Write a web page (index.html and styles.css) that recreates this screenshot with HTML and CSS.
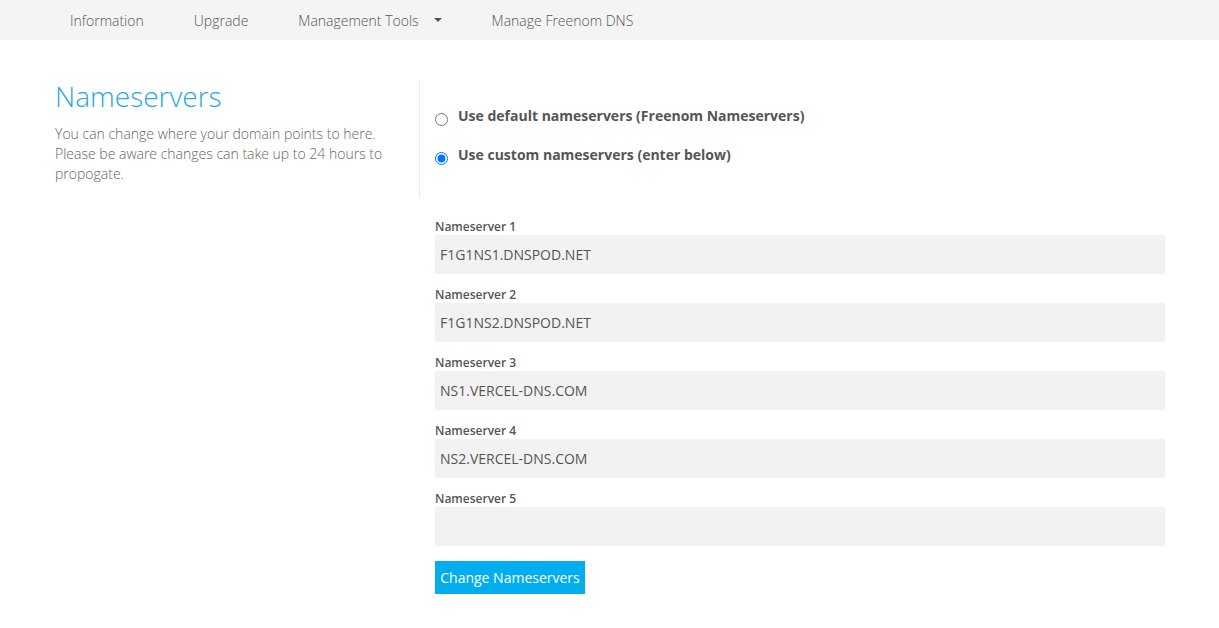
FILE: index.html
```html
<!DOCTYPE html>
<html>
<head>
<meta charset="utf-8">
<link rel="stylesheet" href="styles.css">
</head>
<body>
<nav class="topnav">
  <a class="nav-item">Information</a>
  <a class="nav-item">Upgrade</a>
  <a class="nav-item">Management Tools <span class="caret"></span></a>
  <a class="nav-item">Manage Freenom DNS</a>
</nav>
<main class="page">
  <div class="top-row">
    <div class="intro">
      <h1 class="title">Nameservers</h1>
      <p class="desc">You can change where your domain points to here. Please be aware changes can take up to 24 hours to propogate.</p>
    </div>
    <div class="choices">
      <label class="choice"><input type="radio" name="ns"><span>Use default nameservers (Freenom Nameservers)</span></label>
      <label class="choice"><input type="radio" name="ns" checked><span>Use custom nameservers (enter below)</span></label>
    </div>
  </div>
  <form class="fields">
    <div class="field"><label class="field-label">Nameserver 1</label><input class="field-input" type="text" value="F1G1NS1.DNSPOD.NET"></div>
    <div class="field"><label class="field-label">Nameserver 2</label><input class="field-input" type="text" value="F1G1NS2.DNSPOD.NET"></div>
    <div class="field"><label class="field-label">Nameserver 3</label><input class="field-input" type="text" value="NS1.VERCEL-DNS.COM"></div>
    <div class="field"><label class="field-label">Nameserver 4</label><input class="field-input" type="text" value="NS2.VERCEL-DNS.COM"></div>
    <div class="field"><label class="field-label">Nameserver 5</label><input class="field-input" type="text" value=""></div>
    <button class="submit" type="button">Change Nameservers</button>
  </form>
</main>
</body>
</html>
```

FILE: styles.css
```css
* { box-sizing: border-box; }
html, body { margin: 0; padding: 0; background: #fff; }
body { font-family: "Open Sans", "Liberation Sans", sans-serif; color: #555; }

.topnav {
  height: 40px;
  background: #f4f4f4;
  display: flex;
  align-items: center;
  padding-left: 70px;
  gap: 50px;
}
.nav-item {
  font-size: 14px;
  font-weight: 300;
  color: #555;
  display: flex;
  align-items: center;
}
.caret {
  display: inline-block;
  width: 0; height: 0;
  border-left: 4px solid transparent;
  border-right: 4px solid transparent;
  border-top: 4px solid #555;
  margin-left: 15px;
}

.page { padding: 40px 0 0 55px; }
.top-row { display: flex; }
.intro {
  width: 365px;
  height: 118px;
  border-right: 1px solid #eee;
  padding-right: 30px;
}
.title {
  margin: -1px 0 0;
  font-size: 28px;
  font-weight: 300;
  line-height: 34px;
  color: #29a8e0;
}
.desc {
  margin: 11px 0 0;
  font-size: 14px;
  font-weight: 300;
  line-height: 20px;
  color: #666;
}
.choices {
  padding: 26px 0 0 15px;
  display: flex;
  flex-direction: column;
  gap: 19px;
}
.choice {
  display: flex;
  align-items: center;
  font-size: 14px;
  font-weight: 700;
  line-height: 20px;
  color: #555;
}
.choice input {
  margin: 6px 10px 0 0;
  width: 13px; height: 13px;
}

.fields { margin: 20px 0 0 380px; width: 730px; }
.field { margin-bottom: 12px; }
.field-label {
  display: block;
  font-size: 12px;
  font-weight: 600;
  line-height: 17px;
  color: #555;
}
.field-input {
  display: block;
  width: 730px;
  height: 39px;
  border: 0;
  background: #f2f2f2;
  padding: 0 5px;
  font-family: "Open Sans", "Liberation Sans", sans-serif;
  font-size: 14px;
  color: #555;
  outline: none;
}
.submit {
  margin-top: 3px;
  height: 33px;
  width: 150px;
  border: 0;
  background: #00aeef;
  color: #fff;
  font-family: "Open Sans", "Liberation Sans", sans-serif;
  font-size: 14px;
  padding: 0;
}
```
